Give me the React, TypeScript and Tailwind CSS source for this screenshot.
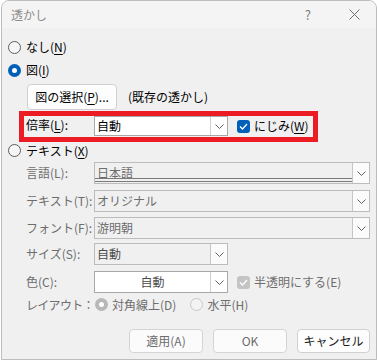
import React from "react";

const Chevron = ({ color = "#606060" }: { color?: string }) => (
  <svg width="9" height="5" viewBox="0 0 9 5" className="block">
    <polyline points="0.5,0.5 4.5,4.5 8.5,0.5" fill="none" stroke={color} strokeWidth="1" />
  </svg>
);

const Check = ({ color = "#ffffff" }: { color?: string }) => (
  <svg width="9" height="7" viewBox="0 0 9 7" className="block">
    <polyline points="1,3.5 3.5,6 8,1" fill="none" stroke={color} strokeWidth="1.3" />
  </svg>
);

function Radio({ checked, disabled, cls = "" }: { checked?: boolean; disabled?: boolean; cls?: string }) {
  if (checked) {
    return (
      <span
        className={`w-[13px] h-[13px] rounded-full flex items-center justify-center shrink-0 ${cls} ${
          disabled ? "bg-[#b8b8b8]" : "bg-[#005fb8]"
        }`}
      >
        <span className="w-[5px] h-[5px] rounded-full bg-white" />
      </span>
    );
  }
  return (
    <span
      className={`w-[13px] h-[13px] rounded-full border shrink-0 ${cls} ${
        disabled ? "border-[#c8c8c8] bg-[#f3f3f3]" : "border-[#5c5c5c] bg-[#f6f6f6]"
      }`}
    />
  );
}

function CheckBox({ disabled }: { disabled?: boolean }) {
  return (
    <span
      className={`w-[13px] h-[13px] rounded-[3px] flex items-center justify-center shrink-0 ${
        disabled ? "bg-[#c4c4c4]" : "bg-[#005fb8]"
      }`}
    >
      <Check />
    </span>
  );
}

function Select({
  w,
  text,
  enabled,
  center,
  dbl,
  textColor,
}: {
  w: string;
  text: string;
  enabled?: boolean;
  center?: boolean;
  dbl?: boolean;
  textColor?: string;
}) {
  return (
    <div
      className={`${w} h-full flex border ${
        enabled ? "border-[#a8a8a8] bg-white" : "border-[#bcbcbc] bg-[#f0f0f0]"
      }`}
    >
      <div className="flex-1 relative flex items-center">
        <span
          className={`${center ? "w-full text-center" : "pl-[2px]"} ${
            textColor ? textColor : enabled ? "text-black" : "text-[#6d6d6d]"
          }`}
        >
          {text}
        </span>
        {dbl && (
          <div className="absolute left-0 right-0 bottom-[1px] h-[4px] border-t border-b border-[#7a7a7a]" />
        )}
      </div>
      <div
        className={`w-[17px] flex items-center justify-center border-l ${
          enabled ? "border-[#cfcfcf] bg-white" : "border-[#c6c6c6] bg-[#fbfbfb]"
        }`}
      >
        <Chevron />
      </div>
    </div>
  );
}

const U = ({ children }: { children: React.ReactNode }) => (
  <span className="underline underline-offset-[2px] decoration-1">{children}</span>
);

export default function App() {
  return (
    <div className="w-[378px] h-[361px] bg-white font-['Noto_Sans_CJK_JP','Noto_Sans',sans-serif] text-[12px] leading-none text-black whitespace-nowrap">
      <div className="ml-[1px] w-[376px] h-[360px] border border-[#bdbdbd] rounded-t-[8px] bg-[#f0f0f0] overflow-hidden flex flex-col">
        {/* title bar */}
        <div className="h-[27px] bg-[#f4f4f4] flex items-center shrink-0">
          <span className="ml-[9px] text-[#8c8c8c] text-[12px]">透かし</span>
          <span className="ml-auto mr-[38px] text-[#7a7a7a] text-[13px]">?</span>
          <svg width="11" height="11" viewBox="0 0 11 11" className="mr-[16px]">
            <line x1="0.5" y1="0.5" x2="10.5" y2="10.5" stroke="#6e6e6e" strokeWidth="1" />
            <line x1="10.5" y1="0.5" x2="0.5" y2="10.5" stroke="#6e6e6e" strokeWidth="1" />
          </svg>
        </div>

        <div className="pl-[6px] flex flex-col">
          {/* なし */}
          <div className="mt-[10px] h-[18px] flex items-center gap-[5px]">
            <Radio />
            <span>
              なし(<U>N</U>)
            </span>
          </div>
          {/* 図 */}
          <div className="mt-[5px] h-[18px] flex items-center gap-[5px]">
            <Radio checked />
            <span>
              図(<U>I</U>)
            </span>
          </div>
          {/* button row */}
          <div className="mt-[5px] h-[26px] flex items-center">
            <div className="ml-[19px] w-[90px] h-[26px] rounded-[4px] border border-[#d0d0d0] bg-[#fdfdfd] flex items-center justify-center">
              図の選択(<U>P</U>)...
            </div>
            <span className="ml-[11px]">(既存の透かし)</span>
          </div>
          {/* red box */}
          <div className="mt-[1px] ml-[11px] w-[299px] h-[31px] border-[5px] border-[#ec1c24] flex items-start">
            <div className="h-[20px] flex items-center pl-[2px] w-[70px] mt-[-1px]">
              <span>
                倍率(<U>L</U>):
              </span>
            </div>
            <div className="h-[20px]">
              <Select w="w-[134px]" text="自動" enabled />
            </div>
            <div className="h-[20px] flex items-center ml-[9px] gap-[4px]">
              <CheckBox />
              <span>
                にじみ(<U>W</U>)
              </span>
            </div>
          </div>
          {/* テキスト */}
          <div className="h-[17px] flex items-center gap-[5px]">
            <Radio />
            <span>
              テキスト(<U>X</U>)
            </span>
          </div>
          {/* 言語 */}
          <div className="mt-[3px] h-[22px] flex items-center">
            <span className="ml-[18px] w-[68px] text-[#6d6d6d]">言語(L):</span>
            <Select w="w-[276px]" text="日本語" dbl />
          </div>
          {/* テキスト(T) */}
          <div className="mt-[6px] h-[22px] flex items-center">
            <span className="ml-[18px] w-[68px] text-[#6d6d6d]">テキスト(T):</span>
            <Select w="w-[276px]" text="オリジナル" />
          </div>
          {/* フォント */}
          <div className="mt-[5px] h-[22px] flex items-center">
            <span className="ml-[18px] w-[68px] text-[#6d6d6d]">フォント(F):</span>
            <Select w="w-[276px]" text="游明朝" />
          </div>
          {/* サイズ */}
          <div className="mt-[4px] h-[22px] flex items-center">
            <span className="ml-[18px] w-[68px] text-[#6d6d6d]">サイズ(S):</span>
            <Select w="w-[134px]" text="自動" textColor="text-[#4a4a4a]" />
          </div>
          {/* 色 */}
          <div className="mt-[6px] h-[22px] flex items-center">
            <span className="ml-[18px] w-[68px] text-[#6d6d6d]">色(C):</span>
            <Select w="w-[134px]" text="自動" enabled center textColor="text-[#4a4a4a]" />
            <div className="ml-[9px] flex items-center gap-[4px]">
              <CheckBox disabled />
              <span className="text-[#6d6d6d]">半透明にする(E)</span>
            </div>
          </div>
          {/* レイアウト */}
          <div className="mt-[3px] h-[17px] flex items-center">
            <span className="ml-[18px] w-[69px] tracking-[-0.7px] text-[#6d6d6d]">レイアウト：</span>
            <Radio checked disabled />
            <span className="ml-[4px] text-[#6d6d6d]">対角線上(D)</span>
            <Radio disabled cls="ml-[14px]" />
            <span className="ml-[4px] text-[#6d6d6d]">水平(H)</span>
          </div>
        </div>

        {/* buttons */}
        <div className="mt-[16px] h-[24px] flex justify-end gap-[10px] pr-[6px]">
          <div className="w-[74px] h-[24px] rounded-[4px] border border-[#d4d4d4] bg-[#fbfbfb] flex items-center justify-center text-[#6b6b6b]">
            適用(A)
          </div>
          <div className="w-[74px] h-[24px] rounded-[4px] border border-[#d4d4d4] bg-[#fbfbfb] flex items-center justify-center text-[#6b6b6b]">
            OK
          </div>
          <div className="w-[73px] h-[24px] rounded-[4px] border border-[#d0d0d0] bg-[#fdfdfd] flex items-center justify-center text-[#1a1a1a]">
            キャンセル
          </div>
        </div>
      </div>
    </div>
  );
}
